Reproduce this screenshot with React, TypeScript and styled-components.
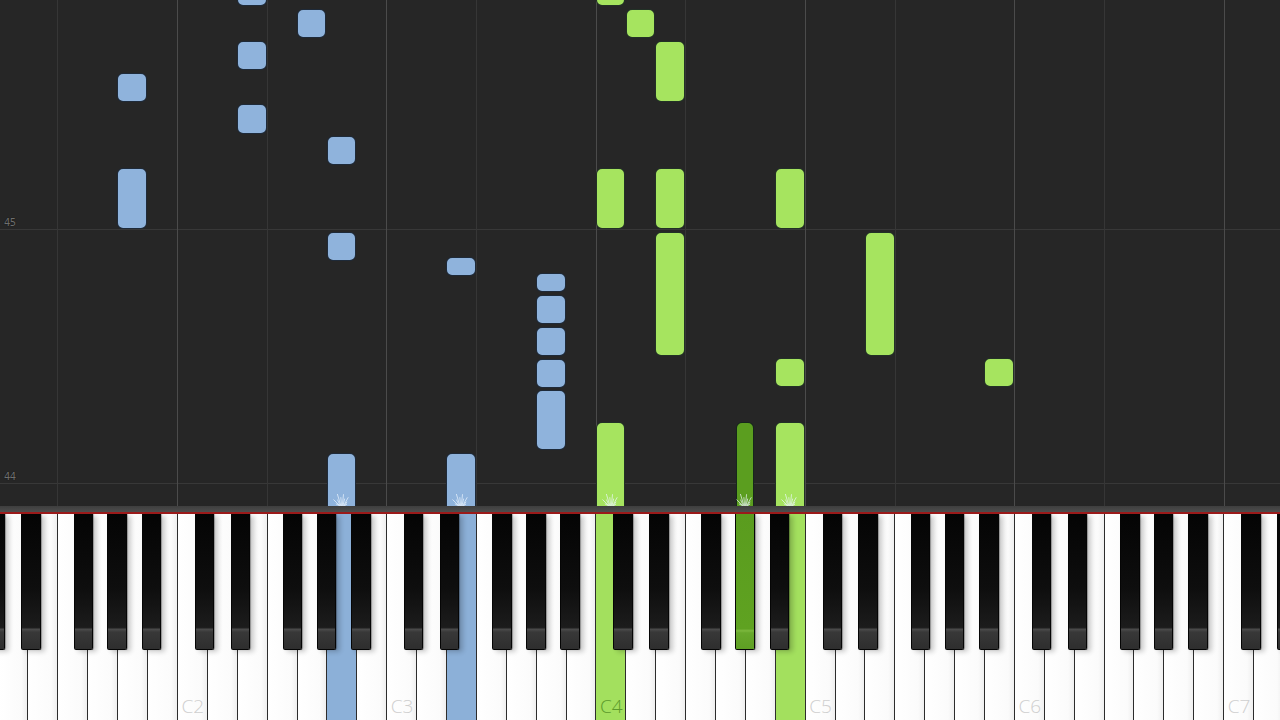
import React from "react";
import styled, { createGlobalStyle, css } from "styled-components";

const W = 209.3 / 7;
const X0 = -32.3;
const LETTERS = ["C", "D", "E", "F", "G", "A", "B"];
const BLACK_OFFSET: Record<string, number> = { C: -2.5, D: 3.5, F: -4, G: 0, A: 4.5 };

const whiteX = (n: number) => X0 + n * W;

type Hand = "left" | "right" | "rightDark";

const COLORS: Record<Hand, { fill: string; key: string; label: string }> = {
  left: { fill: "#8fb3dc", key: "#8cb0d8", label: "#6f8fb5" },
  right: { fill: "#a6e45f", key: "#a3e05e", label: "#5c9a2c" },
  rightDark: { fill: "#5b9e1f", key: "#589a1d", label: "#3f7412" },
};

function keyGeom(name: string) {
  const letter = name[0];
  const sharp = name[1] === "#";
  const octave = parseInt(name.slice(sharp ? 2 : 1), 10);
  const n = (octave - 1) * 7 + LETTERS.indexOf(letter);
  if (!sharp) return { left: whiteX(n), width: W };
  const center = whiteX(n + 1) + BLACK_OFFSET[letter];
  return { left: center - 9, width: 18 };
}

const notes: { key: string; top: number; bottom: number; hand: Hand }[] = [
  { key: "A1", top: 73, bottom: 102, hand: "left" },
  { key: "A1", top: 168, bottom: 229, hand: "left" },
  { key: "E2", top: -20, bottom: 6, hand: "left" },
  { key: "E2", top: 41, bottom: 70, hand: "left" },
  { key: "E2", top: 104, bottom: 134, hand: "left" },
  { key: "G2", top: 9, bottom: 38, hand: "left" },
  { key: "A2", top: 136, bottom: 165, hand: "left" },
  { key: "A2", top: 232, bottom: 261, hand: "left" },
  { key: "A2", top: 453, bottom: 530, hand: "left" },
  { key: "E3", top: 257, bottom: 276, hand: "left" },
  { key: "E3", top: 453, bottom: 530, hand: "left" },
  { key: "A3", top: 273, bottom: 292, hand: "left" },
  { key: "A3", top: 295, bottom: 324, hand: "left" },
  { key: "A3", top: 327, bottom: 356, hand: "left" },
  { key: "A3", top: 359, bottom: 388, hand: "left" },
  { key: "A3", top: 390, bottom: 450, hand: "left" },
  { key: "C4", top: -20, bottom: 6, hand: "right" },
  { key: "C4", top: 168, bottom: 229, hand: "right" },
  { key: "C4", top: 422, bottom: 530, hand: "right" },
  { key: "D4", top: 9, bottom: 38, hand: "right" },
  { key: "E4", top: 41, bottom: 102, hand: "right" },
  { key: "E4", top: 168, bottom: 229, hand: "right" },
  { key: "E4", top: 232, bottom: 356, hand: "right" },
  { key: "G#4", top: 422, bottom: 530, hand: "rightDark" },
  { key: "B4", top: 168, bottom: 229, hand: "right" },
  { key: "B4", top: 358, bottom: 387, hand: "right" },
  { key: "B4", top: 422, bottom: 530, hand: "right" },
  { key: "E5", top: 232, bottom: 356, hand: "right" },
  { key: "B5", top: 358, bottom: 387, hand: "right" },
];

const pressed: Record<string, Hand> = {
  A2: "left",
  E3: "left",
  C4: "right",
  "G#4": "rightDark",
  B4: "right",
};

const GlobalStyle = createGlobalStyle`
  html, body { margin: 0; padding: 0; background: #262626; overflow: hidden; }
  #root { width: 1280px; height: 720px; }
`;

const Stage = styled.div`
  width: 1280px;
  height: 720px;
  display: flex;
  flex-direction: column;
  background: #262626;
  overflow: hidden;
  font-family: "Open Sans", "Liberation Sans", sans-serif;
`;

const Playfield = styled.div`
  position: relative;
  height: 506px;
  flex-shrink: 0;
  overflow: hidden;
  background: #262626;
  display: flex;
  flex-direction: column;
`;

/* measure rows: each measure ends with its line + number at the bottom */
const Measure = styled.div<{ $h: number }>`
  flex: 0 0 ${(p) => p.$h}px;
  display: flex;
  flex-direction: column;
  justify-content: flex-end;
`;

const MeasureLabel = styled.span`
  font-family: "DejaVu Sans", sans-serif;
  font-size: 10px;
  line-height: 10px;
  color: #6e6e6e;
  letter-spacing: -0.6px;
  padding: 0 0 1px 4px;
  text-shadow: 0 0 1px #000;
`;

const MeasureLine = styled.div`
  height: 1px;
  background: #383838;
`;

const VLine = styled.div<{ $strong: boolean }>`
  position: absolute;
  top: 0;
  bottom: 0;
  width: 1px;
  background: ${(p) => (p.$strong ? "#4b4b4b" : "#363636")};
`;

const Note = styled.div<{ $hand: Hand }>`
  position: absolute;
  box-sizing: border-box;
  border-radius: 6px;
  border: 1px solid rgba(10, 18, 28, 0.85);
  background: ${(p) => COLORS[p.$hand].fill};
`;

const Spark = styled.svg`
  position: absolute;
  bottom: 0;
  height: 16px;
  overflow: visible;
`;

const Rail = styled.div`
  height: 6px;
  flex-shrink: 0;
  background: linear-gradient(to bottom, #3e3e3e, #4d4d4d);
`;

const RedLine = styled.div`
  height: 2px;
  flex-shrink: 0;
  background: #9b1a1a;
`;

const Keyboard = styled.div`
  position: relative;
  flex: 1;
  overflow: hidden;
  background: #fff;
`;

const WhiteRow = styled.div`
  display: flex;
  height: 100%;
  margin-left: ${X0}px;
`;

const WhiteKey = styled.div<{ $hand?: Hand }>`
  flex: 0 0 ${W}px;
  box-sizing: border-box;
  height: 100%;
  border-left: 1px solid #2c2c2c;
  display: flex;
  flex-direction: column;
  justify-content: flex-end;
  align-items: center;
  padding-bottom: 3px;
  ${(p) =>
    p.$hand
      ? css`
          background: ${COLORS[p.$hand].key};
        `
      : css`
          background: linear-gradient(to right, #ffffff 0%, #fbfbfb 80%, #efefef 100%);
        `}
`;

const KeyLabel = styled.span<{ $hand?: Hand }>`
  font-size: 19px;
  line-height: 22px;
  font-weight: 300;
  color: ${(p) => (p.$hand ? COLORS[p.$hand].label : "#cfcfcf")};
  padding-left: 1px;
`;

const BlackRow = styled.div`
  position: absolute;
  left: 0;
  top: 0;
  right: 0;
  height: 136px;
`;

const BlackKey = styled.div<{ $hand?: Hand }>`
  position: absolute;
  top: 0;
  height: 136px;
  width: 19.5px;
  box-sizing: border-box;
  border: 1px solid #050505;
  border-top: none;
  border-radius: 0 0 2px 2px;
  box-shadow: 4px 2px 5px rgba(0, 0, 0, 0.2), 1px 0 1px rgba(0, 0, 0, 0.3);
  background: ${(p) =>
    p.$hand
      ? `linear-gradient(to bottom, #5a9c1e 0%, #5fa221 85%, #7cb83e 86.5%, #68a82c 88%, #5e9f23 100%)`
      : `linear-gradient(to bottom, #040404 0%, #0e0e0e 55%, #1c1c1c 84%, #4a4a4a 85.5%, #383838 87.5%, #2e2e2e 100%)`};
`;

const SparkShape: React.FC<{ left: number; width: number }> = ({ left, width }) => {
  const cx = width / 2;
  const rays = [-75, -55, -38, -22, -8, 8, 22, 38, 55, 75];
  const id = `g${Math.round(left)}`;
  return (
    <Spark style={{ left, width }} viewBox={`0 0 ${width} 16`}>
      <defs>
        <radialGradient id={id} cx="50%" cy="100%" r="60%">
          <stop offset="0%" stopColor="#ffffff" stopOpacity="0.85" />
          <stop offset="100%" stopColor="#ffffff" stopOpacity="0" />
        </radialGradient>
      </defs>
      <ellipse cx={cx} cy={16} rx={width * 0.45} ry={5} fill={`url(#${id})`} />
      {rays.map((a, i) => {
        const len = [6, 10, 7, 12, 8, 11, 7, 10, 6, 5][i];
        const rad = (a * Math.PI) / 180;
        return (
          <line
            key={i}
            x1={cx + Math.sin(rad) * 3}
            y1={15.5}
            x2={cx + Math.sin(rad) * len}
            y2={15.5 - Math.cos(rad) * len}
            stroke="#eef7ff"
            strokeOpacity={0.7}
            strokeWidth={1}
            strokeLinecap="round"
          />
        );
      })}
    </Spark>
  );
};

export default function App() {
  const whites: { name: string; n: number }[] = [];
  const blacks: { name: string; n: number; letter: string }[] = [];
  for (let n = 0; n < 44; n++) {
    const letter = LETTERS[n % 7];
    const octave = Math.floor(n / 7) + 1;
    whites.push({ name: `${letter}${octave}`, n });
    if (letter in BLACK_OFFSET) blacks.push({ name: `${letter}#${octave}`, n, letter });
  }

  const cLines = [1, 2, 3, 4, 5, 6].map((o) => whiteX(o * 7));
  const fLines = [0, 1, 2, 3, 4, 5].map((o) => whiteX(o * 7 + 3));

  return (
    <>
      <GlobalStyle />
      <Stage>
        <Playfield>
          <Measure $h={230}>
            <MeasureLabel>45</MeasureLabel>
            <MeasureLine />
          </Measure>
          <Measure $h={254}>
            <MeasureLabel>44</MeasureLabel>
            <MeasureLine />
          </Measure>
          {fLines.map((x) => (
            <VLine key={`f${x}`} $strong={false} style={{ left: x }} />
          ))}
          {cLines.map((x) => (
            <VLine key={`c${x}`} $strong style={{ left: x }} />
          ))}
          {notes.map((nt, i) => {
            const g = keyGeom(nt.key);
            return (
              <Note
                key={i}
                $hand={nt.hand}
                style={{ left: g.left, width: g.width, top: nt.top, height: nt.bottom - nt.top }}
              />
            );
          })}
          {Object.keys(pressed).map((k) => {
            const g = keyGeom(k);
            return <SparkShape key={k} left={g.left} width={g.width} />;
          })}
        </Playfield>
        <Rail />
        <RedLine />
        <Keyboard>
          <WhiteRow>
            {whites.map((w) => {
              const hand = pressed[w.name];
              return (
                <WhiteKey key={w.name} $hand={hand}>
                  {w.name[0] === "C" && w.name !== "C1" ? (
                    <KeyLabel $hand={hand}>{w.name}</KeyLabel>
                  ) : null}
                </WhiteKey>
              );
            })}
          </WhiteRow>
          <BlackRow>
            {blacks.map((b) => {
              const center = whiteX(b.n + 1) + BLACK_OFFSET[b.letter];
              return (
                <BlackKey key={b.name} $hand={pressed[b.name]} style={{ left: center - 9.75 }} />
              );
            })}
          </BlackRow>
        </Keyboard>
      </Stage>
    </>
  );
}
